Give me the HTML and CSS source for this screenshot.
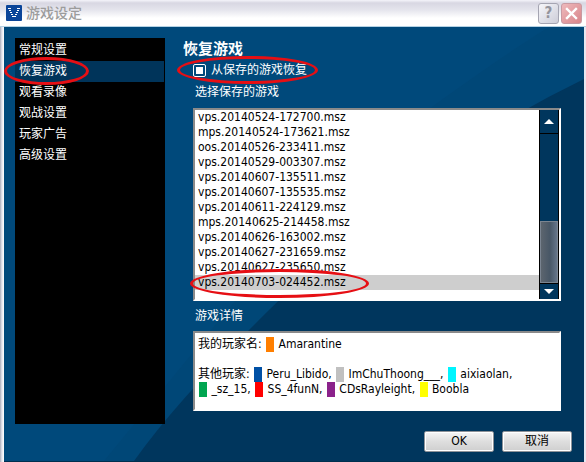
FILE: index.html
```html
<!DOCTYPE html>
<html lang="zh-CN">
<head>
<meta charset="utf-8">
<title>游戏设定</title>
<link rel="stylesheet" href="styles.css">
</head>
<body>
<div class="window">
  <header class="titlebar">
    <svg class="logo" viewBox="0 0 16 16" aria-hidden="true">
      <rect width="16" height="16" rx="1" fill="#0b4599"/>
      <path d="M2 3.500h3M11 3.500h3M3 5.500h2M11 5.500h2M4 7.500h2M10 7.500h2M5 9.500h2M9 9.500h2M6 11.500h4" stroke="#fff" stroke-width="1"/>
    </svg>
    <h1 class="title">游戏设定</h1>
    <button class="caption help" type="button" aria-label="帮助">?</button>
    <button class="caption close" type="button" aria-label="关闭">
      <svg viewBox="0 0 19 19"><path d="M5 5l9 9M14 5l-9 9" stroke="#fff" stroke-width="2.4" stroke-linecap="square"/></svg>
    </button>
  </header>
  <form class="body">
    <svg class="backdrop" viewBox="0 0 580 435" preserveAspectRatio="none" aria-hidden="true">
      <path d="M100 435L190 325Q330 150 435 75Q500 28 545 0H580V435Z" fill="#004777"/>
      <path d="M130 435Q175 371 273 276Q420 137 545 70L580 52V435Z" fill="#00365d"/>
    </svg>
    <div class="content">
      <nav class="menu">
        <a href="#general">常规设置</a>
        <a href="#restore" class="current">恢复游戏<span class="ring ring-menu"></span></a>
        <a href="#replay">观看录像</a>
        <a href="#observe">观战设置</a>
        <a href="#ads">玩家广告</a>
        <a href="#advanced">高级设置</a>
      </nav>
      <main class="panel">
        <h2>恢复游戏</h2>
        <div class="check">
          <input type="checkbox" id="from-save" checked>
          <label for="from-save">从保存的游戏恢复</label>
          <span class="ring ring-check"></span>
        </div>
        <label class="caption-text" for="saves">选择保存的游戏</label>
        <div class="listbox">
          <select id="saves" size="12">
            <option>vps.20140524-172700.msz</option>
            <option>mps.20140524-173621.msz</option>
            <option>oos.20140526-233411.msz</option>
            <option>vps.20140529-003307.msz</option>
            <option>vps.20140607-135511.msz</option>
            <option>vps.20140607-135535.msz</option>
            <option>vps.20140611-224129.msz</option>
            <option>mps.20140625-214458.msz</option>
            <option>vps.20140626-163002.msz</option>
            <option>vps.20140627-231659.msz</option>
            <option>vps.20140627-235650.msz</option>
            <option selected>vps.20140703-024452.msz</option>
          </select>
          <div class="scroll">
            <button type="button" class="arrow arrow-up" aria-label="向上"><svg viewBox="0 0 10 5"><path d="M0 5L5 0L10 5Z" fill="#fff"/></svg></button>
            <div class="track"><div class="thumb"></div></div>
            <button type="button" class="arrow arrow-down" aria-label="向下"><svg viewBox="0 0 10 5"><path d="M0 0H10L5 5Z" fill="#fff"/></svg></button>
          </div>
          <span class="ring ring-save"></span>
        </div>
        <h3 class="caption-text detail-title">游戏详情</h3>
        <div class="details">
          <p>我的玩家名: <i class="chip orange"></i> Amarantine</p>
          <p>其他玩家: <i class="chip blue"></i> Peru_Libido, <i class="chip gray"></i> ImChuThoong___, <i class="chip cyan"></i> aixiaolan,<br><i class="chip green"></i> _sz_15, <i class="chip red"></i> SS_4funN, <i class="chip purple"></i> CDsRayleight, <i class="chip yellow"></i> Boobla</p>
        </div>
      </main>
    </div>
    <footer class="actions">
      <button type="submit">OK</button>
      <button type="button">取消</button>
    </footer>
  </form>
</div>
</body>
</html>
```
FILE: styles.css
```css
* {
  box-sizing: border-box;
}

body {
  margin: 0;
  font: 12px/15px "DejaVu Sans Condensed", "Noto Sans CJK SC", sans-serif;
  color: #fff;
}

h1, h2, h3, p {
  margin: 0;
}

button, select {
  font: inherit;
}

.window {
  display: flex;
  flex-direction: column;
  min-height: 100vh;
  padding: 0 2px 0 4px;
  background: linear-gradient(90deg, #a9abb8 0, #e6e6ef 2px, #fff 4px, #e6e6ef 5px);
}

.titlebar {
  display: flex;
  align-items: center;
  height: 27px;
  margin: 0 -2px 0 -4px;
  padding: 0 4px 0 6px;
  border-bottom: 1px solid #b5d2e4;
  background: linear-gradient(#f4f4fa 0, #d8d7e2 3px, #e5e5ed 10px, #fff 18px, #fff);
}

.logo {
  width: 16px;
  height: 16px;
}

.title {
  flex: 1;
  margin-left: 4px;
  font-size: 14px;
  font-weight: 500;
  color: #9c9c9c;
}

.caption {
  display: grid;
  place-items: center;
  width: 21px;
  height: 21px;
  margin-left: 2px;
  padding: 0;
  border: 1px solid #a5a5b2;
  border-radius: 3px;
  background: linear-gradient(135deg, #f6f6fa, #cdcdd8);
  color: #94949d;
  font-size: 15px;
  font-weight: 700;
}

.close {
  border-color: #c99aa2;
  background: linear-gradient(135deg, #eeb9bc, #d8858a);
}

.close svg {
  width: 19px;
  height: 19px;
}

.body {
  position: relative;
  display: flex;
  flex: 1;
  flex-direction: column;
  border-bottom: 1px solid #00304f;
  background: #00497b;
}

.backdrop {
  position: absolute;
  inset: 0;
  width: 100%;
  height: 100%;
}

.content {
  position: relative;
  display: flex;
  flex: 1;
  gap: 18px;
  padding: 11px 23px 0 11px;
}

.menu {
  flex: 0 0 150px;
  padding-top: 2px;
  background: #000;
}

.menu a {
  position: relative;
  display: block;
  margin-right: 1px;
  padding-left: 4px;
  line-height: 21px;
  color: #fff;
  text-decoration: none;
}

.menu .current {
  background: #00345a;
}

.ring {
  position: absolute;
  border: 3px solid #e60f14;
  border-radius: 50%;
  pointer-events: none;
}

.ring-menu {
  left: -11px;
  top: -4px;
  width: 85px;
  height: 28px;
}

.ring-check {
  left: -16px;
  top: -4px;
  width: 141px;
  height: 28px;
}

.ring-save {
  left: -5px;
  bottom: 1px;
  width: 179px;
  height: 29px;
}

.panel {
  display: flex;
  flex: 1;
  flex-direction: column;
  min-width: 0;
}

h2 {
  font-size: 15px;
  line-height: 22px;
}

.panel > :not(h2) {
  margin-left: 10px;
}

.check {
  position: relative;
  display: flex;
  align-items: center;
  gap: 5px;
  height: 20px;
}

.check input {
  appearance: none;
  width: 13px;
  height: 13px;
  margin: 0;
  border: 1px solid #fff;
  border-radius: 2px;
  background: linear-gradient(#fff, #fff) center / 7px 7px no-repeat;
}

.caption-text {
  padding: 0 0 4px 2px;
  font-size: 12px;
  font-weight: 400;
  line-height: 24px;
}

.listbox, .details {
  border: 2px solid #fff;
  border-top-color: #8a8a8a;
  border-left-color: #8a8a8a;
  background: #fff;
  color: #000;
}

.listbox {
  position: relative;
  display: flex;
  height: 193px;
}

.listbox select {
  flex: 1;
  min-width: 0;
  height: 182px;
  padding: 0;
  border: 0;
  outline: 0;
  background: #fff;
  color: #000;
  font-size: 12px;
  scrollbar-width: none;
}

.listbox option {
  min-height: 15px;
  padding: 0 3px;
  line-height: 15px;
}

.listbox option:checked {
  background: linear-gradient(#cecece, #cecece);
  color: #000;
}

.scroll {
  display: flex;
  flex-direction: column;
  width: 20px;
  border: 1px solid #000;
  border-width: 0 1px;
  background: #00365d;
}

.arrow {
  display: grid;
  place-items: center;
  height: 24px;
  padding: 0;
  border: 0;
  border-bottom: 1px solid #000;
  background: #00365d;
}

.arrow-down {
  height: 16px;
  border-top: 1px solid #000;
  border-bottom: 0;
}

.arrow svg {
  width: 10px;
  height: 5px;
}

.track {
  display: flex;
  flex: 1;
  flex-direction: column;
  justify-content: flex-end;
}

.thumb {
  height: 62px;
  border: 1px solid #7a8490;
  background: linear-gradient(90deg, #5c656e, #485766 55%, #65758a);
}

.detail-title {
  padding-bottom: 0;
  line-height: 30px;
}

.details {
  display: flex;
  flex-direction: column;
  gap: 15px;
  min-height: 80px;
  padding: 4px 3px;
}

.chip {
  display: inline-block;
  width: 8px;
  height: 15px;
  margin: 0 1px;
  vertical-align: top;
}

.orange { background: #ff7f00; }
.blue { background: #0050a5; }
.gray { background: #c0c0c0; }
.cyan { background: #00f5ff; }
.green { background: #00a550; }
.red { background: #f00; }
.purple { background: #8b228b; }
.yellow { background: #ff0; }

.actions {
  position: relative;
  display: flex;
  justify-content: flex-end;
  gap: 8px;
  padding: 7px 12px 9px;
}

.actions button {
  width: 70px;
  height: 21px;
  padding: 0;
  border: 1px solid #8d9298;
  border-radius: 2px;
  background: linear-gradient(#f6f6f6, #dedede 50%, #cfcfcf);
  box-shadow: inset 0 0 0 1px #fff;
  color: #000;
}
```
